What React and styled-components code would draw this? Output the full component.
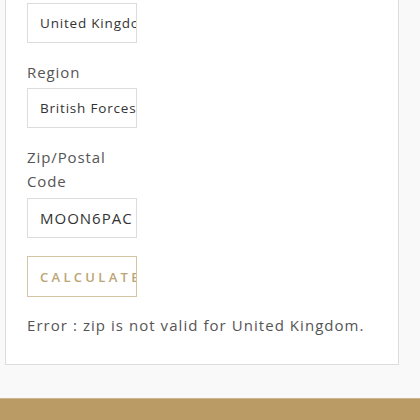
import React from 'react';
import styled, { createGlobalStyle } from 'styled-components';

const GlobalStyle = createGlobalStyle`
  html, body {
    margin: 0;
    padding: 0;
    background: #f9f9f9;
    font-family: "Open Sans", "Noto Sans", sans-serif;
  }
`;

const Page = styled.div`
  width: 420px;
  height: 420px;
  overflow: hidden;
  display: flex;
  flex-direction: column;
  background: #f9f9f9;
`;

const Card = styled.div`
  box-sizing: border-box;
  margin-left: 5px;
  width: 394px;
  background: #fff;
  border: 1px solid #dcdcdc;
  border-top: none;
  padding: 3px 0 27px 21px;
`;

const Form = styled.div`
  width: 110px;
  display: flex;
  flex-direction: column;
`;

const Label = styled.label`
  margin: 17px 0 ${p => (p.$wrap ? '5px' : '4px')};
  font-size: 15px;
  line-height: 24px;
  letter-spacing: 0.9px;
  color: #555;
`;

const Input = styled.input`
  box-sizing: border-box;
  width: 110px;
  height: 40px;
  padding: 0 0 0 12px;
  border: 1px solid #dcdcdc;
  background: #fff;
  font-family: inherit;
  font-size: ${p => (p.$large ? '15px' : '13.5px')};
  letter-spacing: ${p => (p.$large ? '1px' : '0.8px')};
  color: #333;
  outline: none;
`;

const Calculate = styled.button`
  box-sizing: border-box;
  margin-top: 18px;
  width: 110px;
  height: 41px;
  padding: 0 0 0 12px;
  border: 1px solid #d3c5a2;
  background: #fff;
  overflow: hidden;
  white-space: nowrap;
  text-align: left;
  font-family: inherit;
  font-size: 13px;
  font-weight: 600;
  letter-spacing: 3.3px;
  color: #bca574;
`;

const ErrorText = styled.p`
  margin: 16px 0 0;
  font-size: 15px;
  line-height: 24px;
  letter-spacing: 1.05px;
  color: #555;
  white-space: nowrap;
`;

const Gap = styled.div`
  height: 33px;
  flex-shrink: 0;
`;

const Footer = styled.footer`
  flex: 1;
  background: #bb9b65;
  border-top: 1px solid #cdb68c;
`;

export default function App() {
  return (
    <>
      <GlobalStyle />
      <Page>
        <Card>
          <Form>
            <Input readOnly defaultValue="United Kingdom" />
            <Label>Region</Label>
            <Input readOnly defaultValue="British Forces" />
            <Label $wrap>Zip/Postal Code</Label>
            <Input readOnly $large defaultValue="MOON6PAC" />
            <Calculate>CALCULATE</Calculate>
          </Form>
          <ErrorText>Error : zip is not valid for United Kingdom.</ErrorText>
        </Card>
        <Gap />
        <Footer />
      </Page>
    </>
  );
}
